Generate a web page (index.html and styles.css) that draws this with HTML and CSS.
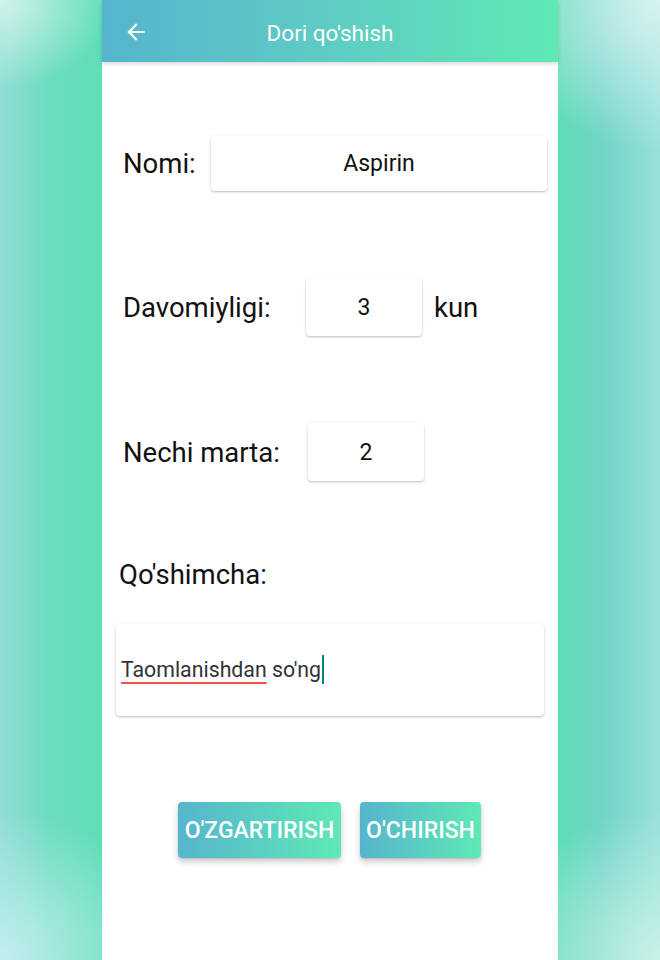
FILE: index.html
```html
<!DOCTYPE html>
<html lang="uz">
<head>
<meta charset="utf-8">
<title>Dori qo'shish</title>
<link rel="stylesheet" href="styles.css">
</head>
<body>
<div class="screen">
  <header class="appbar">
    <svg class="back" viewBox="0 0 24 24" width="26" height="26"><path d="M20 11H7.83l5.59-5.59L12 4l-8 8 8 8 1.41-1.41L7.83 13H20v-2z" fill="#fff"/></svg>
    <h1 class="title">Dori qo'shish</h1>
    <span class="spacer"></span>
  </header>
  <main class="form">
    <div class="row row-name">
      <span class="label label-name">Nomi:</span>
      <div class="field field-name">Aspirin</div>
    </div>
    <div class="row row-days">
      <span class="label label-days">Davomiyligi:</span>
      <div class="field field-small">3</div>
      <span class="unit">kun</span>
    </div>
    <div class="row row-times">
      <span class="label label-times">Nechi marta:</span>
      <div class="field field-small">2</div>
    </div>
    <div class="label label-extra">Qo'shimcha:</div>
    <div class="note"><span class="misspelt">Taomlanishdan</span> so'ng<span class="caret"></span></div>
    <div class="actions">
      <button class="btn btn-edit">O'ZGARTIRISH</button>
      <button class="btn btn-delete">O'CHIRISH</button>
    </div>
  </main>
</div>
</body>
</html>
```
FILE: styles.css
```css
* { box-sizing: border-box; }
html, body { margin: 0; height: 100%; }
body {
  font-family: Roboto, "Noto Sans", sans-serif;
  display: flex;
  justify-content: center;
  overflow: hidden;
  background:
    radial-gradient(ellipse 110px 90px at 0 0, rgba(215,246,236,0.9), rgba(215,246,236,0) 100%),
    radial-gradient(ellipse 170px 150px at 660px 0, rgba(218,243,243,0.95), rgba(218,243,243,0) 100%),
    radial-gradient(ellipse 170px 150px at 0 960px, rgba(200,240,240,0.9), rgba(200,240,240,0) 100%),
    radial-gradient(ellipse 170px 150px at 660px 960px, rgba(205,243,233,0.9), rgba(205,243,233,0) 100%),
    linear-gradient(90deg, #90ddd5 0px, #6cdcc0 50px, #5fdeb7 100px, #5fdcb8 560px, #6fd4c6 600px, #98e1d9 660px);
}
.screen {
  width: 456px;
  height: 960px;
  background: #fff;
  display: flex;
  flex-direction: column;
}
.appbar {
  height: 62px;
  flex: none;
  display: grid;
  grid-template-columns: 1fr auto 1fr;
  align-items: center;
  padding: 4px 0 0 21px;
  background: linear-gradient(90deg, #55b5cd 0%, #5ec9c5 45%, #5fe9b5 100%);
  box-shadow: 0 2px 4px rgba(0,0,0,0.15);
  position: relative;
  z-index: 1;
}
.back { margin-top: -2px; }
.title {
  margin: 0 21px 0 0;
  font-size: 22.5px;
  font-weight: 400;
  color: #fff;
}
.form {
  display: flex;
  flex-direction: column;
  padding: 0 14px 0 21px;
}
.row {
  display: flex;
  align-items: center;
}
.row-name { margin-top: 74px; }
.row-days { margin-top: 87px; }
.row-times { margin-top: 87px; }
.label {
  font-size: 27.5px;
  color: #111;
  flex: none;
}
.label-name { width: 88px; }
.label-days { width: 183px; }
.label-times { width: 185px; }
.label-extra { margin: 78px 0 0 -4px; line-height: 32px; }
.field {
  flex: none;
  background: #fff;
  border-radius: 4px;
  box-shadow: 0 1px 3px rgba(0,0,0,0.22), 0 1px 1px rgba(0,0,0,0.06);
  display: flex;
  align-items: center;
  justify-content: center;
  font-size: 23px;
  color: #111;
}
.field-name { width: 336px; height: 55px; }
.field-small { width: 116px; height: 58px; }
.unit { font-size: 27.5px; color: #111; margin-left: 12px; }
.note {
  margin: 33px 0 0 -7px;
  width: 428px;
  height: 92px;
  border-radius: 4px;
  background: #fff;
  box-shadow: 0 1px 3px rgba(0,0,0,0.22), 0 1px 1px rgba(0,0,0,0.06);
  display: flex;
  align-items: center;
  padding-left: 5px;
  padding-bottom: 2px;
  font-size: 21.3px;
  color: #333;
  white-space: pre;
}
.misspelt {
  text-decoration: underline;
  text-decoration-color: #ef5350;
  text-decoration-thickness: 2px;
  text-underline-offset: 5px;
}
.caret {
  display: inline-block;
  width: 2px;
  height: 29px;
  background: #00897b;
  margin-left: 1px;
}
.actions {
  margin: 86px 0 0 -8px;
  display: flex;
  justify-content: center;
  gap: 19px;
}
.btn {
  height: 56px;
  border: 0;
  border-radius: 4px;
  background: linear-gradient(90deg, #55b5cd 0%, #5fe9b5 100%);
  color: #fff;
  font-family: Roboto, sans-serif;
  font-size: 23px;
  font-weight: 500;
  padding: 0;
  box-shadow: 0 4px 6px rgba(0,0,0,0.2), 0 1px 2px rgba(0,0,0,0.1);
}
.btn-edit { width: 163px; }
.btn-delete { width: 121px; }
```
